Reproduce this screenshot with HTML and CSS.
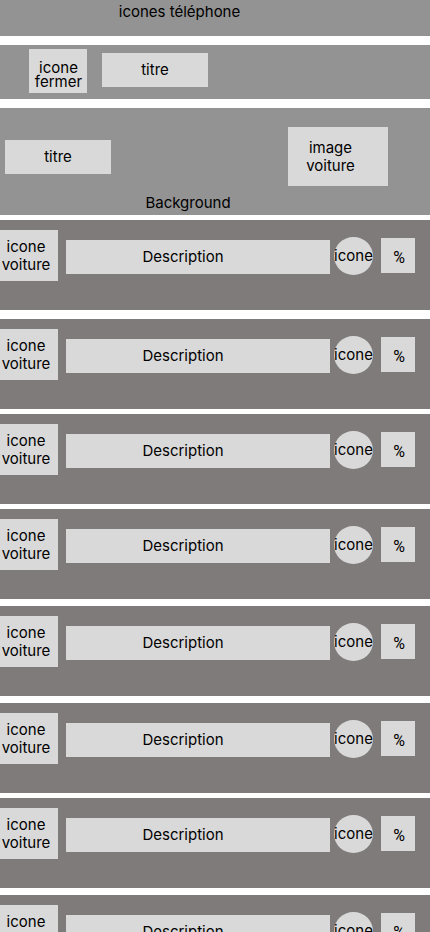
FILE: index.html
```html
<!DOCTYPE html>
<html lang="fr">
<head>
<meta charset="utf-8">
<meta name="viewport" content="width=device-width, initial-scale=1">
<title>Wireframe voiture</title>
<link rel="stylesheet" href="styles.css">
</head>
<body>
<div class="status">icones téléphone</div>
<header class="topbar">
  <button class="close" type="button">icone<br>fermer</button>
  <h1 class="title">titre</h1>
</header>
<main>
  <section class="hero">
    <div class="hero-row">
      <h2 class="title">titre</h2>
      <div class="picture">image<br>voiture</div>
    </div>
    <p class="caption">Background</p>
  </section>
  <ul class="list">
    <li class="row"><div class="car">icone<br>voiture</div><p class="description">Description</p><div class="badge">icone</div><div class="percent">%</div></li>
    <li class="row gap-large"><div class="car">icone<br>voiture</div><p class="description">Description</p><div class="badge">icone</div><div class="percent">%</div></li>
    <li class="row"><div class="car">icone<br>voiture</div><p class="description">Description</p><div class="badge">icone</div><div class="percent">%</div></li>
    <li class="row"><div class="car">icone<br>voiture</div><p class="description">Description</p><div class="badge">icone</div><div class="percent">%</div></li>
    <li class="row gap-medium"><div class="car">icone<br>voiture</div><p class="description">Description</p><div class="badge">icone</div><div class="percent">%</div></li>
    <li class="row gap-medium"><div class="car">icone<br>voiture</div><p class="description">Description</p><div class="badge">icone</div><div class="percent">%</div></li>
    <li class="row"><div class="car">icone<br>voiture</div><p class="description">Description</p><div class="badge">icone</div><div class="percent">%</div></li>
    <li class="row gap-medium"><div class="car">icone<br>voiture</div><p class="description">Description</p><div class="badge">icone</div><div class="percent">%</div></li>
  </ul>
</main>
</body>
</html>
```
FILE: styles.css
```css
* {
  box-sizing: border-box;
}

body {
  margin: 0;
  background: #fff;
  color: #000;
  font: 400 15px/18px Inter, "Liberation Sans", sans-serif;
  text-align: center;
}

h1, h2, p, ul {
  margin: 0;
  padding: 0;
  font: inherit;
}

.status {
  padding: 3px 71px 15px 0;
  background: #939393;
}

.topbar {
  display: flex;
  align-items: flex-start;
  gap: 15px;
  margin-top: 9px;
  padding: 4px 29px 6px;
  background: #939393;
}

.close {
  width: 58px;
  height: 44px;
  padding: 8px 0 0 1px;
  border: 0;
  background: #d9d9d9;
  color: inherit;
  font: inherit;
  line-height: 14px;
}

.title {
  width: 106px;
  padding: 8px 0;
  background: #d9d9d9;
}

.topbar .title {
  margin-top: 4px;
}

.hero {
  margin-top: 9px;
  padding: 19px 0 3px;
  background: #939393;
}

.hero-row {
  display: flex;
  align-items: center;
  justify-content: space-between;
  padding: 0 42px 0 5px;
}

.picture {
  width: 100px;
  padding: 12px 15px 11px 0;
  background: #d9d9d9;
}

.caption {
  margin-top: 8px;
  padding-right: 54px;
}

.list {
  list-style: none;
}

.row {
  display: flex;
  align-items: flex-start;
  margin-top: 5px;
  padding: 10px 15px 29px 0;
  background: #7f7b7a;
}

.gap-medium {
  margin-top: 7px;
}

.gap-large {
  margin-top: 9px;
}

.car {
  width: 58px;
  padding: 8px 6px 7px 0;
  background: #d9d9d9;
}

.description {
  flex: 1;
  margin: 10px 4px 0 8px;
  padding: 8px 30px 8px 0;
  background: #d9d9d9;
}

.badge {
  width: 39px;
  margin-top: 7px;
  padding: 10px 0;
  border-radius: 50%;
  background: #d9d9d9;
}

.percent {
  width: 34px;
  margin: 8px 0 0 8px;
  padding: 11px 0 6px 2px;
  background: #d9d9d9;
  font-family: Roboto, Inter, sans-serif;
  font-size: 16px;
}
```
